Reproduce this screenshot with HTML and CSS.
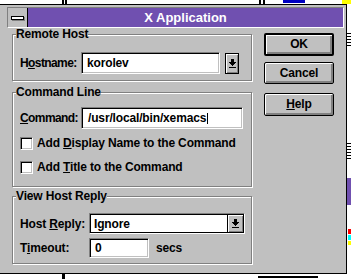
FILE: index.html
```html
<!DOCTYPE html>
<html>
<head>
<meta charset="utf-8">
<link rel="stylesheet" href="styles.css">
</head>
<body>
<div class="window">
  <div class="titlebar">
    <div class="sysmenu"><span class="sysbar"></span></div>
    <div class="caption">X Application</div>
  </div>
  <div class="client">
    <div class="groups">
      <fieldset class="group g1">
        <legend>Remote Host</legend>
        <div class="row r22">
          <span class="lbl w61 tight">H<u>o</u>stname:</span>
          <div class="field host">korolev</div>
          <div class="dropbtn">
            <svg width="7" height="9" viewBox="0 0 7 9" shape-rendering="crispEdges"><rect x="2" y="0" width="3" height="3"/><rect x="0" y="3" width="7" height="1"/><rect x="1" y="4" width="5" height="1"/><rect x="2" y="5" width="3" height="1"/><rect x="3" y="6" width="1" height="1"/><rect x="0" y="8" width="7" height="1"/></svg>
          </div>
        </div>
      </fieldset>
      <fieldset class="group g2">
        <legend>Command Line</legend>
        <div class="row r22">
          <span class="lbl w61 tight"><u>C</u>ommand:</span>
          <div class="field cmd">/usr/local/bin/xemacs<span class="caret"></span></div>
        </div>
        <div class="row cbrow first">
          <span class="check"></span>
          <span>Add <u>D</u>isplay Name to the Command</span>
        </div>
        <div class="row cbrow">
          <span class="check"></span>
          <span>Add <u>T</u>itle to the Command</span>
        </div>
      </fieldset>
      <fieldset class="group g3">
        <legend>View Host Reply</legend>
        <div class="row r21">
          <span class="lbl w69">Host <u>R</u>eply:</span>
          <div class="combo">
            <div class="combo-in">
              <span class="combo-text">Ignore</span>
              <span class="combo-btn">
                <svg width="7" height="9" viewBox="0 0 7 9" shape-rendering="crispEdges"><rect x="2" y="0" width="3" height="3"/><rect x="0" y="3" width="7" height="1"/><rect x="1" y="4" width="5" height="1"/><rect x="2" y="5" width="3" height="1"/><rect x="3" y="6" width="1" height="1"/><rect x="0" y="8" width="7" height="1"/></svg>
              </span>
            </div>
          </div>
        </div>
        <div class="row r20 tm">
          <span class="lbl w69">T<u>i</u>meout:</span>
          <div class="field timeout">0</div>
          <span class="secs">secs</span>
        </div>
      </fieldset>
    </div>
    <div class="buttons">
      <div class="btn default">OK</div>
      <div class="btn cancel">Cancel</div>
      <div class="btn help"><u>H</u>elp</div>
    </div>
  </div>
</div>
</body>
</html>
```
FILE: styles.css
```css
html {
  margin: 0;
  background-color: #fff;
  background-image:
    linear-gradient(#000, #000),
    linear-gradient(#000, #000),
    linear-gradient(#000, #000),
    linear-gradient(#000, #000),
    linear-gradient(#0000c0, #0000c0),
    linear-gradient(#ffff00, #ffff00),
    linear-gradient(#7050b0, #7050b0),
    linear-gradient(#ff0000, #ff0000),
    linear-gradient(#00ffff, #00ffff),
    linear-gradient(#ffff00, #ffff00),
    repeating-linear-gradient(#000 0 1px, #fff 1px 3px),
    repeating-linear-gradient(#000 0 1px, #fff 1px 3px),
    linear-gradient(#000, #000),
    linear-gradient(#000, #000);
  background-repeat: no-repeat;
  background-size:
    2px 4px, 2px 4px, 2px 4px, 2px 4px,
    22px 3px, 9px 4px,
    4px 27px, 3px 5px, 3px 5px, 3px 4px,
    4px 14px, 4px 18px,
    3px 5px, 60px 2px;
  background-position:
    62px 0, 65px 0, 259px 0, 263px 0,
    283px 0, 342px 0,
    347px 178px, 348px 229px, 348px 235px, 348px 241px,
    347px 33px, 347px 143px,
    62px 274px, 258px 276px;
}
body {
  margin: 0;
  padding-top: 4px;
  width: 351px;
  height: 279px;
  box-sizing: border-box;
  overflow: hidden;
  font-family: "Liberation Sans", Arial, sans-serif;
  font-weight: bold;
  font-size: 12px;
  letter-spacing: -0.15px;
  color: #000;
}
u { text-decoration: underline; text-underline-offset: 1px; }

.window {
  box-sizing: border-box;
  width: 347px;
  height: 270px;
  border: 1px solid #000;
  border-left: none;
  background: #c0c0c0;
  padding: 2px 2px 0 7px;
}

.titlebar {
  box-sizing: border-box;
  display: flex;
  height: 21px;
  border: 1px solid;
  border-color: #808080 #fff #fff #808080;
}
.sysmenu {
  box-sizing: border-box;
  width: 20px;
  background: #c0c0c0;
  border-right: 1px solid #000;
  display: flex;
  align-items: center;
  justify-content: center;
}
.sysbar {
  box-sizing: border-box;
  width: 13px;
  height: 4px;
  margin-left: -1px;
  margin-top: 1px;
  border: 1px solid #000;
  background: #fff;
  box-shadow: 1px 1px 0 #808080;
}
.caption {
  flex: 1;
  background: #7050b0;
  color: #fff;
  font-size: 13px;
  letter-spacing: 0;
  line-height: 19px;
  text-align: center;
}

.client { display: flex; }
.groups { margin-left: 5px; width: 240px; }

.group {
  margin: 0;
  padding: 0 6px 0 7px;
  min-width: 0;
  border: 1px solid #808080;
  box-shadow: inset 1px 1px 0 #fff, 1px 1px 0 #fff;
}
.group legend {
  padding: 0;
  margin-left: -4px;
  line-height: 13px;
  background: #c0c0c0;
}
.g1 { padding-top: 11px; padding-bottom: 6px; }
.g2 { margin-top: 5px; padding-top: 8px; padding-bottom: 7px; }
.g3 { margin-top: 3px; padding-top: 10px; padding-bottom: 5px; }

.row { display: flex; align-items: center; }
.r22 { height: 22px; }
.r21 { height: 21px; }
.r20 { height: 20px; }
.tm { margin-top: 4px; }
.lbl { flex: none; }
.tight { letter-spacing: -0.6px; }
.w61 { width: 61px; }
.w69 { width: 69px; }

.field {
  box-sizing: border-box;
  height: 100%;
  display: flex;
  align-items: center;
  padding-left: 5px;
  background: #fff;
  border: 1px solid;
  border-color: #808080 #fff #fff #808080;
  box-shadow: inset 1px 1px 0 #000, inset -1px -1px 0 #c0c0c0;
  white-space: nowrap;
}
.host { width: 139px; }
.cmd { width: 162px; padding-left: 6px; }
.timeout { width: 60px; }
.caret {
  display: inline-block;
  width: 1px;
  height: 11px;
  background: #000;
  margin-left: 1px;
}

.dropbtn {
  box-sizing: border-box;
  width: 14px;
  height: 21px;
  margin-left: 5px;
  border: 1px solid #000;
  background: #c0c0c0;
  box-shadow: inset 1px 1px 0 #fff, inset -1px -1px 0 #808080;
  display: flex;
  align-items: center;
  justify-content: center;
}
.dropbtn svg, .combo-btn svg { display: block; fill: #000; }

.cbrow { height: 24px; }
.cbrow.first { margin-top: 2px; }
.check {
  box-sizing: border-box;
  width: 13px;
  height: 13px;
  margin-right: 4px;
  background: #fff;
  border: 1px solid;
  border-color: #808080 #fff #fff #808080;
  box-shadow: inset 1px 1px 0 #000, inset -1px -1px 0 #c0c0c0;
}

.combo {
  box-sizing: border-box;
  width: 156px;
  height: 21px;
  border: 1px solid;
  border-color: #808080 #fff #fff #808080;
}
.combo-in {
  box-sizing: border-box;
  height: 100%;
  border: 1px solid #000;
  display: flex;
  background: #fff;
}
.combo-text {
  flex: 1;
  display: flex;
  align-items: center;
  padding-left: 3px;
}
.combo-btn {
  box-sizing: border-box;
  width: 16px;
  border-left: 1px solid #000;
  background: #c0c0c0;
  box-shadow: inset 1px 1px 0 #fff, inset -1px -1px 0 #808080;
  display: flex;
  align-items: center;
  justify-content: center;
}
.secs { margin-left: 7px; }

.buttons {
  margin-left: 12px;
  display: flex;
  flex-direction: column;
}
.btn {
  box-sizing: border-box;
  width: 70px;
  height: 23px;
  border: 1px solid #000;
  border-radius: 2px;
  background: #c0c0c0;
  box-shadow: inset 1px 1px 0 #fff, inset -2px -2px 0 #808080;
  display: flex;
  align-items: center;
  justify-content: center;
  padding-bottom: 1px;
}
.btn.default {
  margin-top: 5px;
  border-width: 2px;
}
.btn.cancel { margin-top: 6px; height: 22px; }
.btn.help { margin-top: 9px; }
```
